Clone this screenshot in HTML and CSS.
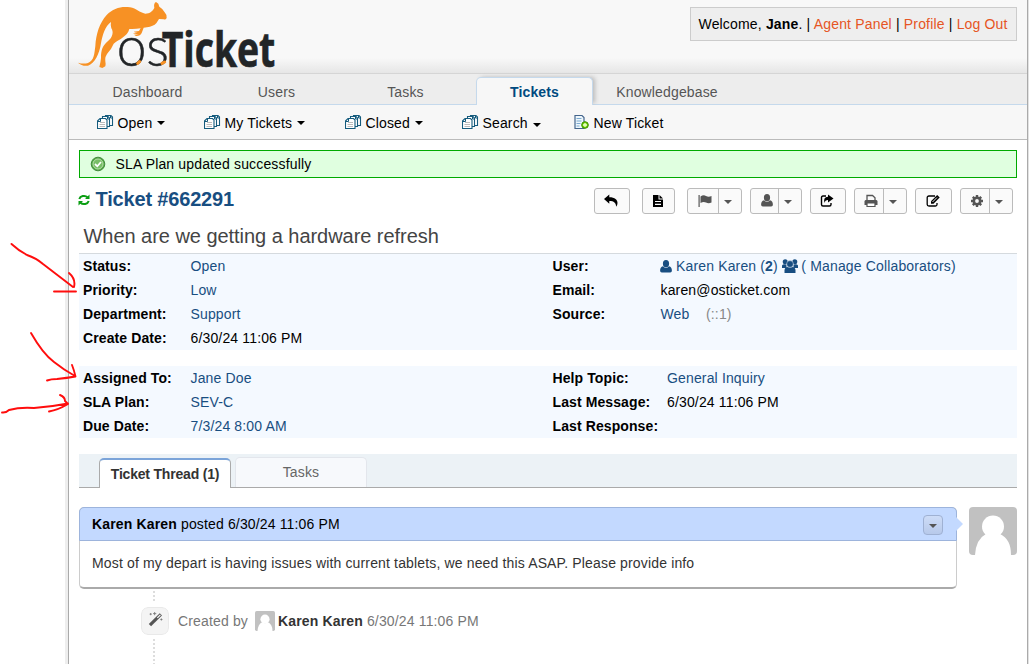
FILE: index.html
```
<!DOCTYPE html>
<html lang="en">
<head>
<meta charset="utf-8">
<title>osTicket – Ticket #662291</title>
<link rel="stylesheet" href="styles.css">
</head>
<body>
<svg class="defs" width="0" height="0" aria-hidden="true">
  <symbol id="queue" viewBox="0 0 17 16">
    <g fill="#fff" stroke="#155b7d" stroke-width="1.1">
      <path d="M8.500 1.500h5.500l1.500 1.500v8.500H8.500z"/>
      <path d="M5.500 2.500H11l1.500 1.500v8.500H5.500z"/>
      <path d="M.5 7 3 4.500h5.500l1.500 1.500v8.500H.5z"/>
    </g>
    <path d="M3 8.500h5M2.500 10.500H8M2.500 12.500H8" stroke="#bbb"/>
    <path d="M3.500 4.500v3H.5M10.500 2.500v2.500h2M13.500 1.500v2.500h2" fill="none" stroke="#155b7d"/>
  </symbol>
  <symbol id="newticket" viewBox="0 0 16 16">
    <path d="M1.500 1.500h7l2 2v11h-9z" fill="#eef7fc" stroke="#44658c" stroke-width="1.200"/>
    <path d="M3 4.500h5M3 7h5M3 9.500h4M3 12h3" stroke="#7ba9d0"/>
    <circle cx="11.500" cy="11" r="3.300" fill="#72d400" stroke="#398a00"/>
    <path d="M11.500 9v4M9.500 11h4" stroke="#efffcf" stroke-width="1.300"/>
  </symbol>
  <symbol id="person" viewBox="0 0 12 13"><ellipse cx="6" cy="3.700" rx="3.100" ry="3.600"/><path d="M3 6.200Q6 9.200 9 6.200q2.900.5 2.900 4.600 0 1.700-1.700 1.700H1.800Q.1 12.500.1 10.800.1 6.700 3 6.200z"/></symbol>
  <symbol id="avatar" viewBox="0 0 48 48">
    <rect width="48" height="48" rx="4" fill="#c1c1c1"/>
    <circle cx="24" cy="19.500" r="11" fill="#fff"/>
    <path d="M17 27q7 5 14 0 11 5 11 21H6Q7 32 17 27z" fill="#fff"/>
  </symbol>
</svg>

<div class="page">
  <header class="header">
    <svg class="logo" viewBox="27 0 630 210" aria-label="osTicket">
      <path fill="#f79124" d="M54 188Q70 193 84 189C103 181 103 160 106 138C108 102 119 68 140 45C160 24 185 18 210 22C230 25 238 38 256 41C270 41 278 33 283 24Q280 10 288 6Q297 10 298 20Q310 27 315 38Q322 45 320 54Q317 60 311 58L297 57Q290 70 284 74Q272 81 251 83L245 99Q240 110 223 107L236 102Q226 105 219 101L233 98Q226 99 221 95L237 93L242 85Q225 88 208 87C202 110 177 118 161 131Q154 147 145 157Q134 169 136 184Q138 194 136 199L127 204L118 201Q122 187 123 174C123 150 128 139 140 127C160 112 161 95 154 85Q151 75 153 66C136 77 127 106 123 130C118 163 104 191 84 197Q65 199 54 188Z"/>
      <text class="logo-os" x="170" y="199" textLength="157" lengthAdjust="spacingAndGlyphs">os</text>
      <text class="logo-ticket" x="305" y="200" textLength="341" lengthAdjust="spacingAndGlyphs">Ticket</text>
      <path d="M233 190l6-5M306 190l8-4" stroke="#f79124" stroke-width="9" stroke-linecap="round"/>
    </svg>
    <div class="welcome">Welcome, <b>Jane</b>. | <a>Agent Panel</a> | <a>Profile</a> | <a>Log Out</a></div>
  </header>

  <nav class="nav">
    <a class="nav-tab">Dashboard</a>
    <a class="nav-tab">Users</a>
    <a class="nav-tab">Tasks</a>
    <a class="nav-tab active">Tickets</a>
    <a class="nav-tab wide">Knowledgebase</a>
  </nav>
  <nav class="subnav">
    <a class="sub s-open"><svg class="qi"><use href="#queue"/></svg><span>Open</span><i class="caret"></i></a>
    <a class="sub s-mine"><svg class="qi"><use href="#queue"/></svg><span>My Tickets</span><i class="caret"></i></a>
    <a class="sub s-closed"><svg class="qi"><use href="#queue"/></svg><span>Closed</span><i class="caret"></i></a>
    <a class="sub s-search"><svg class="qi"><use href="#queue"/></svg><span>Search</span><i class="caret big"></i></a>
    <a class="sub"><svg class="qi"><use href="#newticket"/></svg><span>New Ticket</span></a>
  </nav>

  <main class="content">
    <div class="notice">
      <svg class="ok" viewBox="0 0 16 16"><circle cx="8" cy="8" r="6.800" fill="#55a945" stroke="#418b3c"/><circle cx="8" cy="8" r="5" fill="#78bd67" stroke="#b8dfae"/><path d="M5 8l2.300 2.300L11 6" fill="none" stroke="#fff" stroke-width="1.800"/></svg>
      <span>SLA Plan updated successfully</span>
    </div>

    <div class="titlebar">
      <h2 class="title"><svg class="refresh" viewBox="0 0 12 12" fill="none" stroke="#0a9e12" stroke-width="2"><path d="M1.300 5A4.800 4 0 0 1 9.500 3.200M10.700 7A4.800 4 0 0 1 2.500 8.800"/><path d="M11.500 .5v4.500H7zM.5 11.500V7H5z" fill="#0a9e12" stroke="none"/></svg>Ticket #662291</h2>
      <div class="tools">
        <span class="btn b36"><svg viewBox="0 0 14 14"><path d="M0 5 5.300.5v2.800C11 3.300 13.500 6 13.500 9q0 2-1.300 3.800C12 9 10 7 5.300 7v2.800z"/></svg></span>
        <span class="btn b33 gap"><svg viewBox="0 0 14 14"><path d="M2 1h5.500v4.500H12V13H2z"/><path d="M8.500 1 12 4.500H8.500z"/><path d="M4 7.500h6M4 10.300h6" stroke="#fff" stroke-width="1.200"/></svg></span>
        <span class="btn split b55 gap"><span><svg class="g" viewBox="0 0 14 14"><path d="M.5 1h1.200v12H.5zM2.500 2.500q3-2 5.500-.5t5.500 0v6.500q-3 1.300-5.500 0t-5.500.5z"/></svg></span><em><i class="caret grey"></i></em></span>
        <span class="btn split b52"><span><svg class="g" viewBox="-1 0 14 14"><use href="#person" width="12" height="13"/></svg></span><em><i class="caret grey"></i></em></span>
        <span class="btn b36"><svg viewBox="0 0 14 14"><path d="M8 .5 13.500 4.500 8 8.500V6Q5 6 4.500 9 2.800 3.200 8 2.800z"/><path d="M6 2H3Q1.500 2 1.500 3.500v7Q1.500 12 3 12h6.500Q11 12 11 10.500V9" fill="none" stroke="#000" stroke-width="1.400"/></svg></span>
        <span class="btn split b53"><span><svg class="g" viewBox="0 0 14 14"><path d="M3 6.500V1.500h5.500L11 3.800V6.500" fill="none" stroke="#555" stroke-width="1.300"/><path d="M1.500 6h11L13.500 7v4H.5V7z"/><path d="M3 9h8v3.500H3z" fill="#fff" stroke="#555" stroke-width="1.200"/></svg></span><em><i class="caret grey"></i></em></span>
        <span class="btn b37"><svg viewBox="0 0 14 14"><path d="M9 2H3Q1.200 2 1.200 3.500v7Q1.200 12 3 12h6.500Q11 12 11 10.500V9" fill="none" stroke="#000" stroke-width="1.300"/><path d="M5 9.800V7.300L11.200 1 13.700 3.500 7.500 9.800z"/><path d="M6.500 8 11 3.500" stroke="#fff" stroke-width=".9"/></svg></span>
        <span class="btn split b53"><span><svg class="g" viewBox="0 0 14 14"><path d="M7 1v12M1 7h12M2.800 2.800l8.400 8.400M11.200 2.800l-8.400 8.400" stroke="#555" stroke-width="2.400"/><circle cx="7" cy="7" r="3.200" fill="#f9f9f9" stroke="#555" stroke-width="2.600"/></svg></span><em><i class="caret grey"></i></em></span>
      </div>
    </div>

    <h3 class="subject">When are we getting a hardware refresh</h3>

    <section class="info">
      <dl class="col left">
        <dt>Status:</dt><dd><a>Open</a></dd>
        <dt>Priority:</dt><dd><a>Low</a></dd>
        <dt>Department:</dt><dd><a>Support</a></dd>
        <dt>Create Date:</dt><dd>6/30/24 11:06 PM</dd>
      </dl>
      <dl class="col right">
        <dt>User:</dt>
        <dd><a class="user"><svg class="pi"><use href="#person"/></svg><span>Karen Karen (<b>2</b>)</span><svg class="group" viewBox="0 0 16 14"><circle cx="3.200" cy="2.800" r="2.500"/><circle cx="12.800" cy="2.800" r="2.500"/><path d="M0 9V6.500Q1 4.500 4.500 5.500V9zM16 9V6.500Q15 4.500 11.500 5.500V9z"/><circle cx="8" cy="5" r="3.400" stroke="#f4f9ff" stroke-width=".5"/><path d="M2.500 14V11Q3 8 5.300 8q2.700 1.600 5.400 0 2.300 0 2.800 3v3z"/></svg><span>( Manage Collaborators)</span></a></dd>
        <dt>Email:</dt><dd>karen@osticket.com</dd>
        <dt>Source:</dt><dd><a>Web</a><span class="ip">(::1)</span></dd>
      </dl>
    </section>
    <section class="info second">
      <dl class="col left">
        <dt>Assigned To:</dt><dd><a>Jane Doe</a></dd>
        <dt>SLA Plan:</dt><dd><a>SEV-C</a></dd>
        <dt>Due Date:</dt><dd><a>7/3/24 8:00 AM</a></dd>
      </dl>
      <dl class="col right far">
        <dt>Help Topic:</dt><dd><a>General Inquiry</a></dd>
        <dt>Last Message:</dt><dd>6/30/24 11:06 PM</dd>
        <dt>Last Response:</dt><dd></dd>
      </dl>
    </section>

    <div class="tabs">
      <a class="tab on">Ticket Thread (1)</a>
      <a class="tab">Tasks</a>
    </div>

    <div class="thread">
      <article class="entry">
        <header class="entry-head"><span><b>Karen Karen</b> posted 6/30/24 11:06 PM</span><span class="more"><i class="caret grey"></i></span></header>
        <p class="entry-body">Most of my depart is having issues with current tablets, we need this ASAP. Please provide info</p>
      </article>
      <svg class="avatar"><use href="#avatar"/></svg>
    </div>

    <div class="event">
      <span class="wand"><svg viewBox="0 0 14 14"><path d="M1.800 12.200 12 2.300" stroke="#555" stroke-width="3"/><path d="M8.700 5.500 11.600 2.700" stroke="#f4f4f4" stroke-width="1.200"/><path d="M2.500 1v2M1.500 2h2M6.200 0v3M4.700 1.500h3M12.500 6v2M11.500 7h2" stroke="#777" stroke-width=".8"/></svg></span>
      <span class="by">Created by</span>
      <svg class="mini"><use href="#avatar" width="20" height="20"/></svg>
      <span><b>Karen Karen</b> 6/30/24 11:06 PM</span>
    </div>
  </main>
</div>

<svg class="marks" viewBox="0 0 80 430" fill="none" stroke="#ff0d0d" stroke-width="1.900" stroke-linecap="round" stroke-linejoin="round">
  <path d="M11.500 244Q19 251 27 255Q36 258 43 264L73 287M69 273Q76 279 74 287M54 291.500H76"/>
  <path d="M31 333Q43 354 54 362Q64 370 75 376M72 365Q74 370 75.500 376.500Q67 378 57 379Q51 379 47 380.500"/>
  <path d="M2 412.500Q6 413 9 410Q20 407 34 408Q50 407 68 403.500M60 395Q65 397 65 401L68 404Q58 410 49 411.500"/>
</svg>
</body>
</html>
```
FILE: styles.css
```
* { box-sizing: border-box; }
body { margin: 0; background: #fff; font: 14px/24px "Liberation Sans", Arial, sans-serif; letter-spacing: .15px; color: #000; height: 664px; overflow: hidden; }
.defs { display: block; position: absolute; }
h2, h3, dl, dd, p { margin: 0; }
i, em { font-style: normal; }
a { color: #184e81; }

.page { margin-left: 65px; width: 964px; height: 664px; border-left: 3px solid #eee; border-right: 1px solid #e2e2e2; box-shadow: inset 1px 0 #aaa, inset -1px 0 #aaa; padding: 0 1px; }
.header { height: 74px; display: flex; justify-content: space-between; align-items: flex-start; background: linear-gradient(#f8f8f8 0, #f8f8f8 58px, #e6e6e6 73px); border-bottom: 1px solid #d5d5d5; padding-right: 10px; }
.logo { width: 210px; height: 70px; display: block; overflow: visible; letter-spacing: 0; }
.logo-os { font: 300 168px Lato, sans-serif; fill: #222527; stroke: #222527; stroke-width: 1.5px; }
.logo-ticket { font: 700 144px "Open Sans", sans-serif; fill: #222527; stroke: #222527; stroke-width: 2px; }
.welcome { margin-top: 7px; height: 34px; width: 327px; padding: 0 7.5px; border: 1px solid #ccc; background: #eee; line-height: 32px; white-space: nowrap; letter-spacing: .17px; }
.welcome a { color: #e65524; }

.nav { height: 31px; display: flex; gap: 12px; align-items: flex-end; background: #ededed; border-bottom: 1px solid #c5d9ec; padding-left: 20px; }
.nav-tab { width: 117px; height: 27px; text-align: center; line-height: 30px; color: #555; }
.nav-tab.wide { width: 124px; }
.nav-tab.active { height: 28px; margin-bottom: -1px; border: 1px solid #c5d9ec; border-bottom: 0; border-radius: 5px 5px 0 0; background: #f7f7f7; color: #004a80; font-weight: bold; box-shadow: 3px -1px 4px -1px #bbb; clip-path: inset(-5px -6px 0 -5px); line-height: 28px; }
.subnav { height: 35px; display: flex; background: #f7f7f7; border-bottom: 1px solid #bbb; padding-left: 28px; }
.sub { display: flex; align-items: center; color: #000; line-height: 34px; white-space: nowrap; }
.sub span { margin-left: 3.5px; padding-top: 2px; }
.qi { width: 17px; height: 16px; }
.s-open { width: 107px; } .s-mine { width: 141px; } .s-closed { width: 117px; } .s-search { width: 111px; }
.caret { display: block; width: 0; height: 0; border: 4px solid transparent; border-top: 4px solid #000; border-bottom: 0; margin-left: 5px; margin-top: 2px; }
.caret.big { border-width: 4.5px 4.5px 0; margin-top: 5px; }
.caret.grey { border-width: 4px 4px 0; border-top-color: #555; margin: 2px 0 0; }

.content { padding: 10px 10px 0; }
.notice { height: 28px; border: 1px solid #0a0; background: #e0ffe0; display: flex; align-items: center; gap: 9.5px; padding-left: 10px; }
.ok { width: 16px; height: 16px; }
.titlebar { height: 44px; display: flex; justify-content: space-between; align-items: flex-start; padding: 10px 4px 0 0; }
.title { font-size: 20px; line-height: 22px; color: #184e81; display: flex; align-items: center; letter-spacing: -.17px; }
.refresh { width: 12px; height: 12px; margin: 2px 5.5px 0 -1px; }
.tools { display: flex; gap: 8px; }
.btn { height: 26px; border: 1px solid #bbb; border-radius: 3px; background: #fafafa; display: flex; align-items: center; justify-content: center; }
.btn svg { width: 14px; height: 14px; display: block; margin: -1px 0 0 -2px; }
.btn .g { fill: #555; margin-left: 4px; }
.gap { margin-left: 4px; }
.b33 { width: 33px; } .b36 { width: 36px; } .b37 { width: 37px; } .b52 { width: 52px; } .b53 { width: 53px; } .b55 { width: 55px; }
.split > span { flex: 1; display: flex; justify-content: center; }
.split em { width: 23px; height: 24px; border-left: 1px solid #bbb; display: flex; align-items: center; justify-content: center; padding-right: 4px; }
.subject { height: 31px; padding: 0 0 0 4.5px; font-weight: normal; font-size: 20px; line-height: 28px; color: #444; letter-spacing: -.04px; }

.info { display: flex; background: #f4f9ff; height: 97px; border-top: 1px solid #d5dade; padding-left: 4px; }
.second { margin-top: 16px; height: 72px; border: 0; }
.col { display: grid; align-content: start; grid-auto-rows: 24px; }
.col.left { width: 469.5px; grid-template-columns: 107.5px 1fr; }
.col.right { grid-template-columns: 108px 1fr; }
.col.far { grid-template-columns: 114.5px 1fr; }
dt { font-weight: bold; white-space: nowrap; letter-spacing: .1px; }
.user { display: flex; align-items: center; white-space: nowrap; }
.pi { width: 12px; height: 13px; fill: #184e81; margin: 0 4px 0 -.5px; }
.group { width: 16px; height: 14px; fill: #184e81; margin: 0 3.5px 0 4px; }
.ip { color: #888; margin-left: 16.5px; }

.tabs { margin-top: 16px; height: 34px; display: flex; align-items: flex-end; gap: 4px; background: #ecf2f6; border-bottom: 1px solid #aaa; padding-left: 20px; }
.tab { width: 132px; height: 30px; border: 1px solid #e3e6ec; border-bottom: 0; border-radius: 5px 5px 0 0; background: #f7f9fc; color: #666; text-align: center; line-height: 29px; }
.tab.on { height: 30px; width: 132px; margin-bottom: -1px; border: 1px solid #aaa; border-top: 2px solid #7ba4d9; border-bottom: 0; background: #fff; color: #333; font-weight: bold; line-height: 29px; letter-spacing: -.2px; }

.thread { margin-top: 19px; display: flex; gap: 12px; }
.entry { width: 878px; height: 82px; border: 1px solid #ccc; border-bottom: 2px solid #aaa; border-radius: 5px; }
.entry-head { position: relative; margin: -1px -1px 0; height: 34px; border: 1px solid #9db4dc; border-radius: 5px 5px 0 0; background: #c3d9ff; display: flex; align-items: center; justify-content: space-between; padding: 0 13px 0 12px; }
.entry-head::after { content: ""; position: absolute; right: -7px; top: 9px; width: 0; height: 0; border: 7px solid transparent; border-left-color: #c3d9ff; border-right: 0; }
.more { width: 20px; height: 20px; margin-top: 2px; border: 1px solid #9fb1d3; border-radius: 4px; background: linear-gradient(#cddcf7, #b7c9ea); display: flex; align-items: center; justify-content: center; }
.entry-body { padding: 10px 12px; color: #333; white-space: nowrap; }
.avatar { width: 48px; height: 48px; }
.event { height: 75px; padding: 18px 0 29px 62px; display: flex; align-items: center; color: #777; background: repeating-linear-gradient(#ddd 0 2px, transparent 2px 4px) 74px 2px / 2px 73px no-repeat; white-space: nowrap; }
.wand { width: 28px; height: 28px; border: 1px solid #e9e9e9; border-radius: 7px; background: #f4f4f4; display: flex; align-items: center; justify-content: center; outline: 4px solid #fff; margin-right: 9px; }
.wand svg { width: 15px; height: 15px; margin-top: -3px; }
.event b { color: #333; }
.mini { width: 20px; height: 20px; margin: 0 3px 0 7px; }
.marks { position: absolute; left: 0; top: 0; width: 80px; height: 430px; }
```
